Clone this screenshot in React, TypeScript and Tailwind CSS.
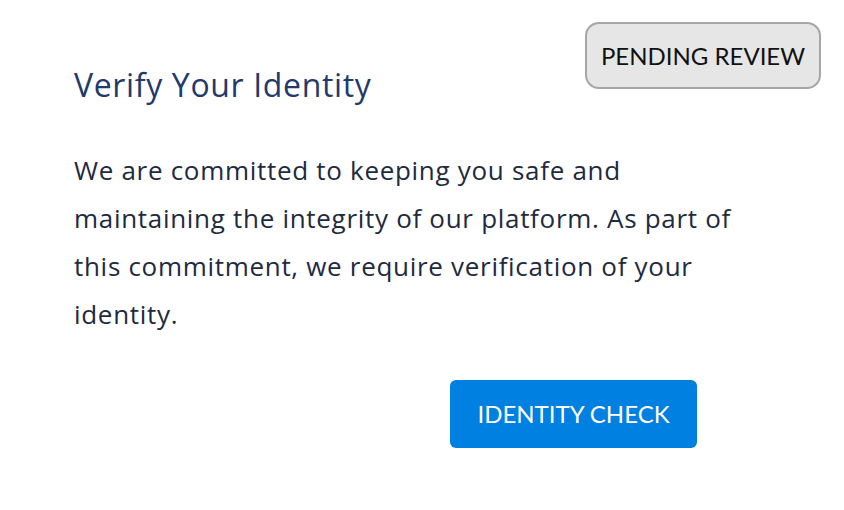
export default function App() {
  return (
    <div className="relative h-[510px] w-[844px] bg-white font-['Lato',sans-serif]">
      {/* status badge */}
      <div className="absolute right-[23px] top-[22px] flex h-[67px] w-[236px] items-center justify-center rounded-[14px] border-2 border-[#a6a6a6] bg-[#e6e6e6] text-[24px] text-[#111111]">
        PENDING REVIEW
      </div>

      <div className="flex flex-col pl-[74px] pt-[62px]">
        <h1 className="font-['Open_Sans',sans-serif] text-[32px] leading-[46px] tracking-[0.65px] text-[#1f3a6b]">
          Verify Your Identity
        </h1>
        <p className="mt-[38px] w-[680px] font-['Open_Sans',sans-serif] text-[26px] leading-[48px] tracking-[0.7px] text-[#1e2a40]">
          We are committed to keeping you safe and maintaining the integrity of our platform. As part of
          this commitment, we require verification of your identity.
        </p>
        <button className="ml-[376px] mt-[42px] flex h-[68px] w-[247px] items-center justify-center rounded-[6px] bg-[#0080e0] text-[24px] text-white">
          IDENTITY CHECK
        </button>
      </div>
    </div>
  );
}
